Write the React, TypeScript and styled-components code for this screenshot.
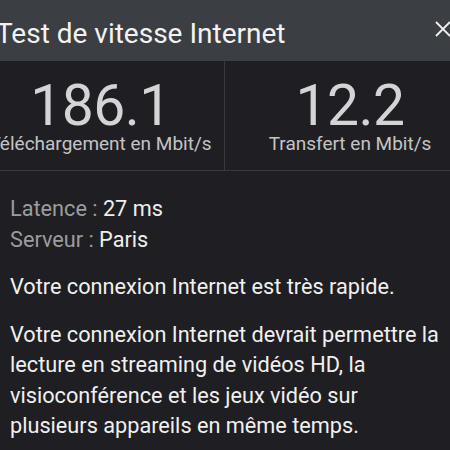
import React from "react";
import styled, { createGlobalStyle } from "styled-components";

const GlobalStyle = createGlobalStyle`
  html, body {
    margin: 0;
    padding: 0;
    background: #1f1f23;
    overflow: hidden;
  }
  body {
    font-family: Roboto, "Noto Sans", sans-serif;
    -webkit-font-smoothing: antialiased;
  }
`;

const Sheet = styled.div`
  width: 450px;
  height: 450px;
  background: #1f1f23;
  color: #eeeeee;
  overflow: hidden;
`;

const Header = styled.header`
  height: 61px;
  background: #3b3e43;
  display: flex;
  align-items: center;
  justify-content: space-between;
  padding: 6px 0 0 0;
  box-sizing: border-box;
`;

const Title = styled.h1`
  margin: 0 0 0 -4px;
  font-size: 28px;
  font-weight: 400;
  color: #f2f2f2;
`;

const CloseButton = styled.button`
  background: none;
  border: none;
  padding: 0;
  margin: -9px -4px 0 0;
  display: flex;
  color: #f2f2f2;
  cursor: pointer;
`;

const Stats = styled.div`
  display: grid;
  grid-template-columns: 248px 250px;
  margin-left: -23px;
  width: 498px;
  height: 110px;
  border-bottom: 1px solid #38393d;
  box-sizing: border-box;
`;

const Stat = styled.div<{ $divider?: boolean }>`
  display: flex;
  flex-direction: column;
  align-items: center;
  padding-top: 20px;
  border-right: ${(p) => (p.$divider ? "1px solid #38393d" : "none")};
`;

const Value = styled.div`
  font-size: 57px;
  font-weight: 400;
  line-height: 50px;
  letter-spacing: -0.5px;
  color: #d4d4d6;
`;

const Unit = styled.div`
  margin-top: 2px;
  font-size: 19px;
  line-height: 22px;
  color: #c4c4c6;
`;

const Body = styled.div`
  padding: 23px 8px 0 10px;
  font-size: 21.7px;
  line-height: 30.5px;
`;

const InfoLine = styled.div``;

const Label = styled.span`
  color: #9c9c9e;
`;

const Paragraph = styled.p`
  margin: 17px 0 0 0;
  color: #f0f0f0;
`;

const CloseIcon = () => (
  <svg width="22" height="22" viewBox="0 0 22 22" fill="none">
    <path d="M4 4 L18 18 M18 4 L4 18" stroke="currentColor" strokeWidth="1.8" />
  </svg>
);

const App: React.FC = () => {
  return (
    <>
      <GlobalStyle />
      <Sheet>
        <Header>
          <Title>Test de vitesse Internet</Title>
          <CloseButton aria-label="Fermer">
            <CloseIcon />
          </CloseButton>
        </Header>
        <Stats>
          <Stat $divider>
            <Value>186.1</Value>
            <Unit>Téléchargement en Mbit/s</Unit>
          </Stat>
          <Stat>
            <Value>12.2</Value>
            <Unit>Transfert en Mbit/s</Unit>
          </Stat>
        </Stats>
        <Body>
          <InfoLine>
            <Label>Latence :</Label> 27 ms
          </InfoLine>
          <InfoLine>
            <Label>Serveur :</Label> Paris
          </InfoLine>
          <Paragraph>Votre connexion Internet est très rapide.</Paragraph>
          <Paragraph>
            Votre connexion Internet devrait permettre la lecture en streaming
            de vidéos HD, la visioconférence et les jeux vidéo sur plusieurs
            appareils en même temps.
          </Paragraph>
        </Body>
      </Sheet>
    </>
  );
};

export default App;
